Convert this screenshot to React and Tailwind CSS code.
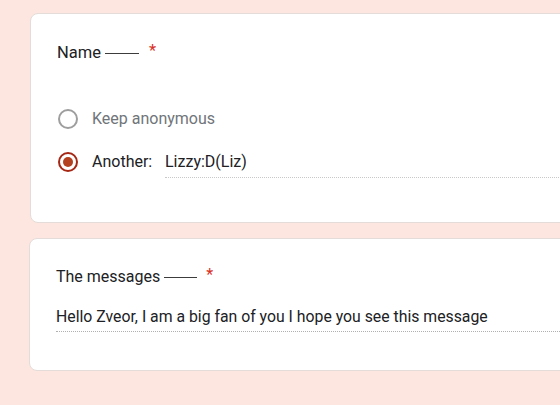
import React from "react";

const Dash = ({ w = "w-[34px]" }) => (
  <span className={`inline-block ${w} h-px bg-[#3c3c3c] ml-[4px]`} />
);

const Radio = ({ checked }) =>
  checked ? (
    <span className="w-5 h-5 rounded-full border-2 border-[#a52714] flex items-center justify-center flex-shrink-0">
      <span className="w-[10px] h-[10px] rounded-full bg-[#b3401f]" />
    </span>
  ) : (
    <span className="w-5 h-5 rounded-full border-2 border-[#9e9e9e] flex-shrink-0" />
  );

export default function App() {
  return (
    <div
      className="w-[560px] h-[405px] overflow-hidden bg-[#fde6df] pt-[13px] pl-[30px]"
      style={{ fontFamily: "Roboto, 'Liberation Sans', sans-serif" }}
    >
      <div className="w-[560px] h-[210px] bg-white rounded-l-[8px] border border-[#e4dcd9] pl-[26px] pt-[27px]">
        <div className="flex items-center text-[16.5px] text-[#202124] h-6">
          <span>Name</span>
          <Dash w="w-[34px]" />
          <span className="text-[#d93025] ml-[10px] relative top-[-2px]">*</span>
        </div>
        <div className="mt-[42px] flex items-center h-6 ml-[1px]">
          <Radio />
          <span className="ml-[14px] text-[16px] text-[#70757a]">Keep anonymous</span>
        </div>
        <div className="mt-[19px] flex items-start h-7 ml-[1px]">
          <span className="mt-[2px]"><Radio checked /></span>
          <span className="ml-[14px] text-[16px] text-[#202124] w-[73px]">Another:</span>
          <div className="flex-1 border-b border-dotted border-[#c8c8c8] pb-[3px] text-[16px] text-[#202124]">
            Lizzy:D(Liz)
          </div>
        </div>
      </div>

      <div className="w-[560px] h-[133px] mt-[15px] -ml-[1px] bg-white rounded-l-[8px] border border-[#e4dcd9] pl-[26px] pt-[26px]">
        <div className="flex items-center text-[16px] text-[#202124] h-6">
          <span>The messages</span>
          <Dash w="w-[33px]" />
          <span className="text-[#d93025] ml-[9px] relative top-[-2px]">*</span>
        </div>
        <div className="mt-[16px] border-b border-dotted border-[#b0b0b0] pb-[2px] text-[15.8px] text-[#202124]">
          Hello Zveor, I am a big fan of you I hope you see this message
        </div>
      </div>
    </div>
  );
}
